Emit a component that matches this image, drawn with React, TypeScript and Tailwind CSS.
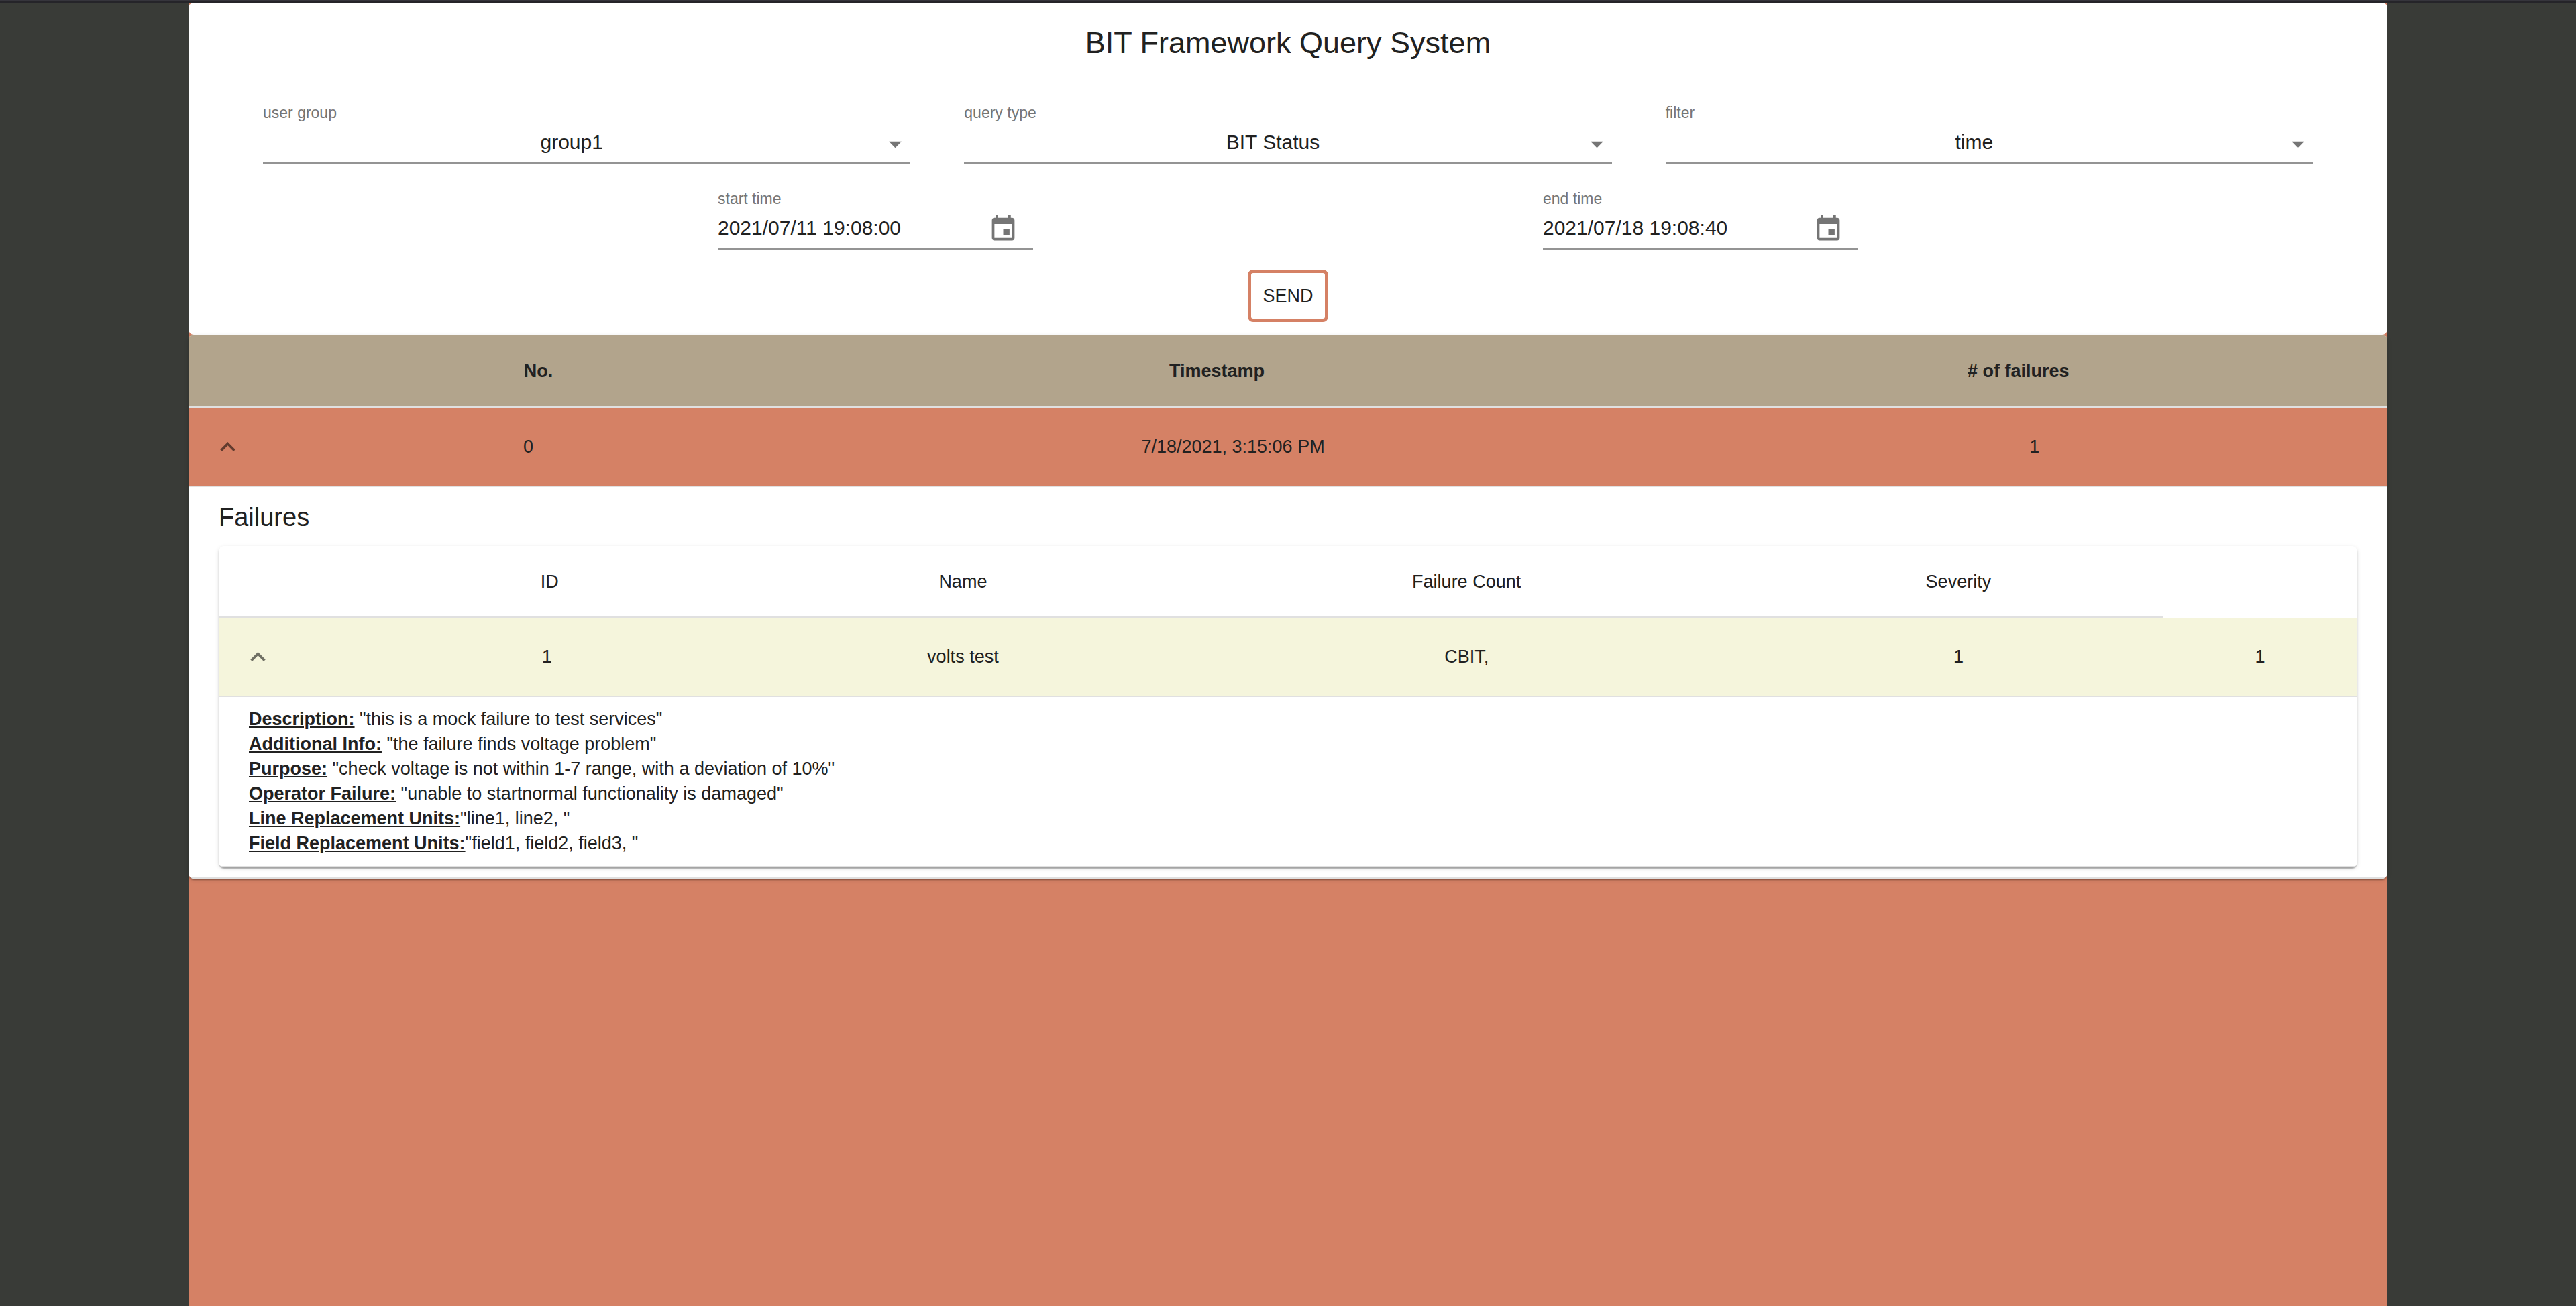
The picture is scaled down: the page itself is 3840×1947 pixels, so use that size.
import React, { useState } from "react";

const ARROW_DOWN = "M7 10l5 5 5-5z";
const CHEVRON_UP = "M7.41 15.41L12 10.83l4.59 4.58L18 14l-6-6-6 6z";
const CHEVRON_DOWN = "M7.41 8.59L12 13.17l4.59-4.58L18 10l-6 6-6-6z";
const CALENDAR =
  "M17 12h-5v5h5v-5zM16 1v2H8V1H6v2H5c-1.11 0-1.99.9-1.99 2L3 19c0 1.1.89 2 2 2h14c1.1 0 2-.9 2-2V5c0-1.1-.9-2-2-2h-1V1h-2zm3 18H5V8h14v11z";

function Icon({ d, className }: { d: string; className: string }) {
  return (
    <svg viewBox="0 0 24 24" fill="currentColor" aria-hidden="true" className={className}>
      <path d={d} />
    </svg>
  );
}

function SelectField({ id, label, options }: { id: string; label: string; options: string[] }) {
  return (
    <div className="flex flex-1 flex-col">
      <label htmlFor={id} className="text-[23px] leading-[26px] text-[#757575]">
        {label}
      </label>
      <div className="relative flex border-b-2 border-[#949494]">
        <select
          id={id}
          className="h-[61px] w-full appearance-none bg-transparent pr-[45px] text-center text-[30px] text-[#212121] outline-none"
        >
          {options.map((o) => (
            <option key={o}>{o}</option>
          ))}
        </select>
        <Icon d={ARROW_DOWN} className="pointer-events-none absolute top-[11px] right-0 size-[45px] text-[#757575]" />
      </div>
    </div>
  );
}

function DateField({ id, label, value }: { id: string; label: string; value: string }) {
  return (
    <div className="flex w-[470px] flex-col">
      <label htmlFor={id} className="text-[23px] leading-[26px] text-[#757575]">
        {label}
      </label>
      <div className="flex h-[63px] items-center border-b-2 border-[#949494] pt-1">
        <input
          id={id}
          defaultValue={value}
          className="min-w-0 flex-1 bg-transparent pb-1 text-[30px] text-[#212121] outline-none"
        />
        <button type="button" aria-label={`Choose ${label}`} className="mr-[22px] text-[#757575]">
          <Icon d={CALENDAR} className="size-[45px]" />
        </button>
      </div>
    </div>
  );
}

function ExpandButton({ open, onClick }: { open: boolean; onClick: () => void }) {
  return (
    <button
      type="button"
      aria-label="expand row"
      aria-expanded={open}
      onClick={onClick}
      className="flex size-[56px] items-center justify-center rounded-full text-black/54"
    >
      <Icon d={open ? CHEVRON_UP : CHEVRON_DOWN} className="size-[45px]" />
    </button>
  );
}

const DETAILS = [
  ["Description:", ' "this is a mock failure to test services"'],
  ["Additional Info:", ' "the failure finds voltage problem"'],
  ["Purpose:", ' "check voltage is not within 1-7 range, with a deviation of 10%"'],
  ["Operator Failure:", ' "unable to startnormal functionality is damaged"'],
  ["Line Replacement Units:", '"line1, line2, "'],
  ["Field Replacement Units:", '"field1, field2, field3, "'],
];

function FailuresTable() {
  const [open, setOpen] = useState(true);
  return (
    <table className="w-full table-fixed border-separate border-spacing-0 overflow-hidden rounded-lg bg-white text-center shadow-[0_4px_2px_-2px_rgba(0,0,0,0.2),0_2px_2px_0_rgba(0,0,0,0.14),0_2px_6px_0_rgba(0,0,0,0.12)]">
      <colgroup>
        <col className="w-[6%]" />
        <col className="w-[18.7%]" />
        <col className="w-[20.2%]" />
        <col className="w-[26.9%]" />
        <col className="w-[19.1%]" />
        <col />
      </colgroup>
      <thead>
        <tr className="h-[107px]">
          <td className="border-b-2 border-[#e0e0e0]" />
          <th scope="col" className="border-b-2 border-[#e0e0e0] pl-2 font-normal">
            ID
          </th>
          {["Name", "Failure Count", "Severity"].map((h) => (
            <th key={h} scope="col" className="border-b-2 border-[#e0e0e0] font-normal">
              {h}
            </th>
          ))}
          <td />
        </tr>
      </thead>
      <tbody>
        <tr className="h-[118px] bg-[#f5f5dc]">
          <td className="border-b-2 border-[#e0e0e0] pl-[30px]">
            <ExpandButton open={open} onClick={() => setOpen(!open)} />
          </td>
          {["1", "volts test", "CBIT,", "1", "1"].map((v, i) => (
            <td key={i} className="border-b-2 border-[#e0e0e0]">
              {v}
            </td>
          ))}
        </tr>
        {open && (
          <tr>
            <td colSpan={6} className="border-b-2 border-[#e0e0e0] px-[45px] py-[15px] text-left">
              {DETAILS.map(([name, text]) => (
                <p key={name} className="leading-[37px] whitespace-pre">
                  <b className="underline">{name}</b>
                  {text}
                </p>
              ))}
            </td>
          </tr>
        )}
      </tbody>
    </table>
  );
}

function ResultsTable() {
  const [open, setOpen] = useState(true);
  return (
    <table className="w-full table-fixed border-separate border-spacing-0 overflow-hidden rounded-lg bg-white text-center text-[27px] leading-[38px] shadow-[0_4px_2px_-2px_rgba(0,0,0,0.2),0_2px_2px_0_rgba(0,0,0,0.14),0_2px_6px_0_rgba(0,0,0,0.12)]">
      <colgroup>
        <col className="w-[3.8%]" />
        <col className="w-[23.3%]" />
        <col className="w-[40.8%]" />
        <col />
      </colgroup>
      <thead>
        <tr className="h-[109px] bg-[#b2a48c]">
          <td className="border-b-2 border-[#e0e0e0]" />
          <th scope="col" className="border-b-2 border-[#e0e0e0] pl-[30px] font-bold">
            No.
          </th>
          {["Timestamp", "# of failures"].map((h) => (
            <th key={h} scope="col" className="border-b-2 border-[#e0e0e0] pr-12 font-bold">
              {h}
            </th>
          ))}
        </tr>
      </thead>
      <tbody>
        <tr className="h-[118px] bg-[#d58165]">
          <td className="border-b-2 border-[#e0e0e0] pl-[30px]">
            <ExpandButton open={open} onClick={() => setOpen(!open)} />
          </td>
          {["0", "7/18/2021, 3:15:06 PM", "1"].map((v, i) => (
            <td key={i} className="border-b-2 border-[#e0e0e0]">
              {v}
            </td>
          ))}
        </tr>
        {open && (
          <tr>
            <td colSpan={4} className="border-b-2 border-[#e0e0e0] px-[45px] py-[15px]">
              <h2 className="mb-[13px] text-left text-[38px] leading-[60px]">Failures</h2>
              <FailuresTable />
            </td>
          </tr>
        )}
      </tbody>
    </table>
  );
}

export default function App() {
  return (
    <div className="flex min-h-screen flex-col bg-[#393b37] font-['Liberation_Sans',Arial,sans-serif] text-[#212121]">
      <div className="h-1 border-b-2 border-[#252429] bg-[#36353c]" />
      <main className="mx-[281px] flex-1 bg-[#d58165]">
        <form
          onSubmit={(e) => e.preventDefault()}
          className="flex flex-col items-center rounded-lg bg-white pb-[19px]"
        >
          <h1 className="mt-[30px] text-[45px] leading-[60px]">BIT Framework Query System</h1>
          <div className="mt-[61px] flex w-full gap-20 px-[111px]">
            <SelectField id="user-group" label="user group" options={["group1", "group2"]} />
            <SelectField id="query-type" label="query type" options={["BIT Status", "Reports"]} />
            <SelectField id="filter" label="filter" options={["time", "severity"]} />
          </div>
          <div className="mt-[39px] flex w-full justify-around px-[409px]">
            <DateField id="start-time" label="start time" value="2021/07/11 19:08:00" />
            <DateField id="end-time" label="end time" value="2021/07/18 19:08:40" />
          </div>
          <button
            type="submit"
            className="mt-[30px] h-[78px] w-[120px] rounded-lg border-[5px] border-[#d58165] text-[27px]"
          >
            SEND
          </button>
        </form>
        <ResultsTable />
      </main>
    </div>
  );
}
